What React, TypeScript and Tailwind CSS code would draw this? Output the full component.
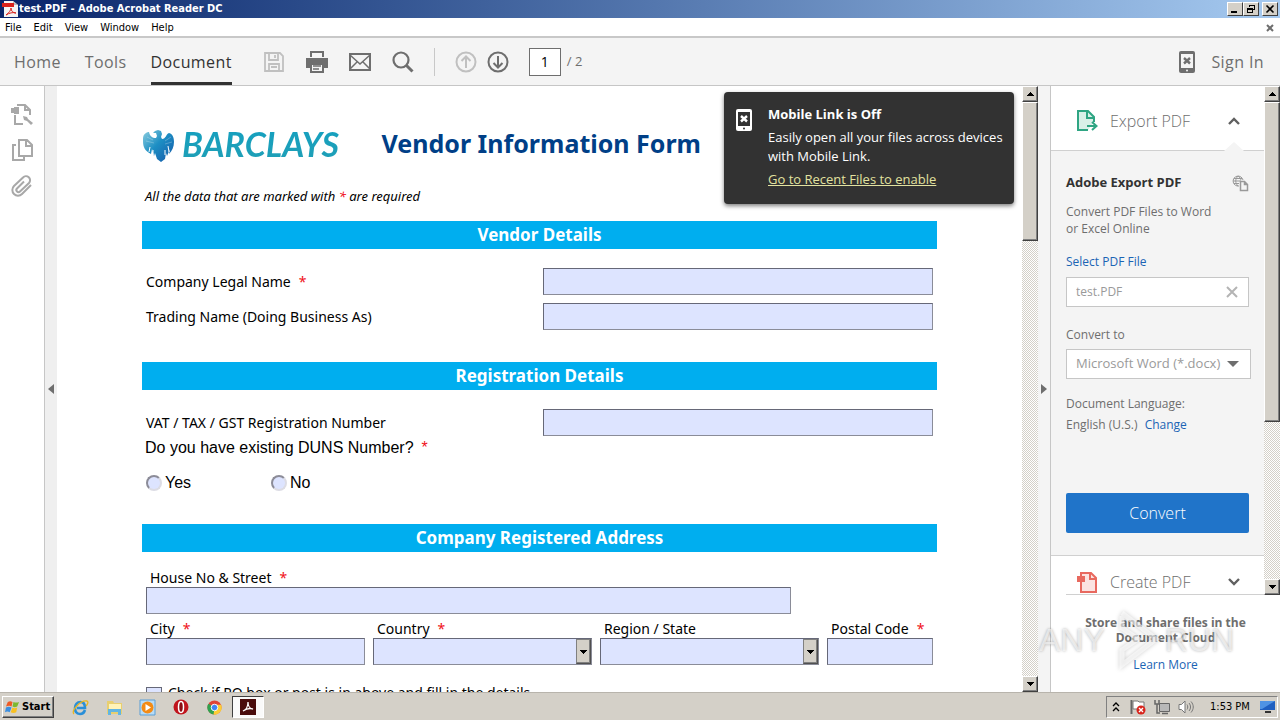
import { useState } from "react";
import type { ReactNode } from "react";

const menus = ["File", "Edit", "View", "Window", "Help"];

const ui = "font-['Open_Sans','Noto_Sans',sans-serif]";
const win = "font-['DejaVu_Sans_Condensed','DejaVu_Sans',sans-serif]";
const field = "h-[27px] w-full rounded-none border border-[#8a8c98] border-t-[#666878] border-l-[#666878] bg-[#dde4ff] px-1 text-sm outline-none";
const raised = "border border-t-white border-l-white border-r-[#404040] border-b-[#404040] bg-[#d4d0c8]";

function Arrow({ up }: { up?: boolean }) {
  return (
    <svg width="7" height="4" viewBox="0 0 7 4" shapeRendering="crispEdges" aria-hidden="true">
      <path d={up ? "M3 0h1v1h1v1h1v1h1v1H0V3h1V2h1V1h1z" : "M0 0h7v1H6v1H5v1H4v1H3V3H2V2H1V1H0z"} />
    </svg>
  );
}

function Scrollbar({ thumb }: { thumb: string }) {
  return (
    <div className="flex w-4 shrink-0 flex-col bg-[repeating-conic-gradient(#ffffff_0_25%,#d4d0c8_0_50%)] bg-[length:2px_2px]">
      <button aria-label="Scroll up" className={`flex h-4 shrink-0 items-center justify-center shadow-[inset_-1px_-1px_0_#808080] ${raised}`}>
        <Arrow up />
      </button>
      <div className={`${thumb} shrink-0 shadow-[inset_-1px_-1px_0_#808080] ${raised}`} />
      <div className="flex-1" />
      <button aria-label="Scroll down" className={`flex h-4 shrink-0 items-center justify-center shadow-[inset_-1px_-1px_0_#808080] ${raised}`}>
        <Arrow />
      </button>
    </div>
  );
}

function Icon({ size = 24, className, children }: { size?: number; className?: string; children: ReactNode }) {
  return (
    <svg width={size} height={size} viewBox="0 0 24 24" fill="none" stroke="currentColor" strokeWidth="2" className={className} aria-hidden="true">
      {children}
    </svg>
  );
}

function PhoneIcon({ className, screen }: { className: string; screen: string }) {
  return (
    <svg width="16" height="22" viewBox="0 0 16 22" className={className} aria-hidden="true">
      <rect width="16" height="22" rx="2" fill="currentColor" />
      <rect x="2" y="3" width="12" height="14" fill={screen} />
      <path d="M5 7l6 5.500M11 7l-6 5.500" stroke="currentColor" strokeWidth="2.400" />
      <circle cx="8" cy="19.500" r="1" fill={screen} />
    </svg>
  );
}

function Star() {
  return <span className="ml-2 text-[#f01020]">*</span>;
}

function Band({ children }: { children: ReactNode }) {
  return (
    <h2 className="flex h-7 items-center justify-center bg-[#00aeef] text-[17px] font-bold text-white">{children}</h2>
  );
}

function FieldRow({ id, label, required }: { id: string; label: string; required?: boolean }) {
  return (
    <div className="flex items-center justify-between px-1">
      <label htmlFor={id}>
        {label}
        {required && <Star />}
      </label>
      <div className="w-[390px]">
        <input id={id} className={field} />
      </div>
    </div>
  );
}

function Labeled({ id, label, required, select }: { id: string; label: string; required?: boolean; select?: boolean }) {
  return (
    <div className="min-w-0">
      <label htmlFor={id} className="flex h-[19px] items-center pl-1 whitespace-nowrap">
        {label}
        {required && <Star />}
      </label>
      {select ? (
        <div className="relative">
          <select id={id} className={`appearance-none ${field}`}>
            <option></option>
          </select>
          <span className="pointer-events-none absolute top-px right-px bottom-px flex w-[15px] items-center justify-center border border-t-[#808080] border-l-[#808080] border-r-[#505050] border-b-[#505050] bg-[#d4d0c8] shadow-[inset_-1px_-1px_0_#808080]">
            <Arrow />
          </span>
        </div>
      ) : (
        <input id={id} className={field} />
      )}
    </div>
  );
}

function TitleBar() {
  const box = `flex h-[14px] w-4 items-center justify-center ${raised}`;
  return (
    <header className={`flex h-[18px] shrink-0 items-center bg-linear-to-r from-[#0a246a] to-[#a6caf0] pr-[2px] pl-[2px] ${win}`}>
      <svg width="16" height="16" viewBox="0 0 16 16" aria-hidden="true">
        <path d="M2 0h9l5 4v12H2z" fill="#f4f4f4" />
        <path d="M11 0v4h5z" fill="#bbb" />
        <path d="M0 2h12v4H0z" fill="#d8221c" />
        <path d="M4 14c3-2 5-5 5-7 0 3 2 5 5 5-3-1-7 0-10 2z" fill="none" stroke="#d8221c" />
      </svg>
      <h1 className="ml-px flex-1 text-[11px] font-bold text-white">test.PDF - Adobe Acrobat Reader DC</h1>
      <button aria-label="Minimize" className={box}>
        <svg width="10" height="10" viewBox="0 0 10 10"><path d="M1 7h6v2H1z" /></svg>
      </button>
      <button aria-label="Restore" className={box}>
        <svg width="10" height="10" viewBox="0 0 10 10" fill="none" stroke="#000" shapeRendering="crispEdges">
          <path d="M3.500 3V1.500h5v4H7M3 1h6M1.500 4.500h5v4h-5zM1 5h6" />
        </svg>
      </button>
      <button aria-label="Close" className={`ml-[3px] ${box}`}>
        <svg width="10" height="10" viewBox="0 0 10 10"><path d="M1.500 1.500l7 7M8.500 1.500l-7 7" stroke="#000" strokeWidth="1.600" /></svg>
      </button>
    </header>
  );
}

function Toolbar() {
  return (
    <div className={`flex h-12 shrink-0 items-center border-b border-[#c6c6c6] bg-[#f4f4f4] pr-4 pl-[14px] text-[#6e6e6e] ${ui}`}>
      <nav className="flex h-full items-center gap-6 text-base tracking-wide">
        <a href="#home">Home</a>
        <a href="#tools">Tools</a>
        <a href="#document" className="flex h-full items-center border-b-[3px] border-[#323232] pt-[3px] text-[#323232]">Document</a>
      </nav>
      <div className="ml-[30px] flex items-center gap-[19px]">
        <button aria-label="Save" className="text-[#c0c0c0]">
          <Icon>
            <path d="M3 3h15l3 3v15H3zM7 3v7h9V3M7 21v-7h10v7M13 5v3M9 17h6" strokeWidth="1.800" />
          </Icon>
        </button>
        <button aria-label="Print">
          <Icon>
            <path d="M6 7V2h12v5M6 14v8h12v-8z" />
            <path d="M1 8h22v10h-4v-5H5v5H1z" fill="currentColor" stroke="none" />
            <path d="M8 16h8M8 19h6" strokeWidth="1.300" />
          </Icon>
        </button>
        <button aria-label="Email">
          <Icon>
            <path d="M2 4h20v16H2z" />
            <path d="M2 5l10 9L22 5M2 19l7-7M22 19l-7-7" strokeWidth="1.500" />
          </Icon>
        </button>
        <button aria-label="Search">
          <Icon>
            <circle cx="10" cy="10" r="7.500" strokeWidth="2.200" />
            <path d="M15.500 15.500l6 6" strokeWidth="3" />
          </Icon>
        </button>
      </div>
      <div className="ml-[19px] h-7 w-px bg-[#c8c8c8]" />
      <div className="ml-[19px] flex items-center gap-2">
        <button aria-label="Previous page" className="text-[#c0c0c0]">
          <Icon>
            <circle cx="12" cy="12" r="9.500" />
            <path d="M12 18V7M7.500 11L12 6.500l4.500 4.500" />
          </Icon>
        </button>
        <button aria-label="Next page">
          <Icon>
            <circle cx="12" cy="12" r="9.500" />
            <path d="M12 6v11M7.500 13l4.500 4.500 4.500-4.500" />
          </Icon>
        </button>
      </div>
      <input aria-label="Page number" defaultValue="1" className="ml-[19px] h-7 w-8 border border-[#6e6e6e] bg-white text-center text-sm text-black" />
      <span className="ml-[6px] text-[13px]">/ 2</span>
      <div className="ml-auto flex items-center gap-4">
        <PhoneIcon className="text-[#6e6e6e]" screen="#f4f4f4" />
        <button className="text-base tracking-wide">Sign In</button>
      </div>
    </div>
  );
}

function LeftRail() {
  return (
    <aside className="flex shrink-0">
      <div className="flex w-11 flex-col items-center gap-3 bg-white pt-4 text-[#a8a8a8]">
        <button aria-label="Page tools">
          <Icon>
            <path d="M7 3h8l5 5v5M15 3v5h5M5 13v9h8" />
            <path d="M1 6h3V5h5v7H4v-1H1zM13 14l4 1 1 2 5 4-2 2-4-4-3-1z" fill="currentColor" stroke="none" />
          </Icon>
        </button>
        <button aria-label="Page thumbnails">
          <Icon>
            <path d="M9 2h8l5 5v11H9zM16 2v6h6M6 7H3v15h11v-3" />
          </Icon>
        </button>
        <button aria-label="Attachments">
          <Icon>
            <path d="M21 11l-9 9a5 5 0 0 1-8-8l9-8.500a3.800 3.800 0 0 1 6 5.500l-9 8.500a2 2 0 0 1-3-3l7-7" />
          </Icon>
        </button>
      </div>
      <div className="flex w-[13px] items-center justify-center border-l border-[#c6c6c6] bg-[#efefef]">
        <svg width="6" height="10" viewBox="0 0 6 10"><path d="M6 0v10L0 5z" fill="#6e6e6e" /></svg>
      </div>
    </aside>
  );
}

function Eagle() {
  return (
    <svg width="34" height="36" viewBox="0 0 34 36" aria-hidden="true">
      <defs>
        <linearGradient id="eagle" x1="0" y1="0" x2="1" y2="1">
          <stop offset="0" stopColor="#8fcfdf" />
          <stop offset="0.450" stopColor="#1d8fc4" />
          <stop offset="1" stopColor="#1557a8" />
        </linearGradient>
      </defs>
      <path
        d="M11 7l2-2 3-1 3 1 1 3-1 3 1 2c4 0 4-5 7-6 4 1 5 5 5 9 0 5-2 9-5 12l1-5-3 7-1-3-1 6-4 3-4-3-2-6-1 3-2-7-1 5C3 25 1 21 1 15c0-4 0-6 3-8 1-1 2-1 3-1 1 4 3 6 7 6l1-2-1-3z"
        fill="url(#eagle)"
      />
      <path d="M8 21l-1 5M26 20l1 6M11 24v5M23 24v5" stroke="#ffffff" strokeWidth="1" />
      <path d="M5 11l6 3M4 15l8 2M29 11l-6 4M30 16l-7 2" stroke="#ffffff40" strokeWidth="1" />
    </svg>
  );
}

function VendorForm() {
  return (
    <main className="min-w-0 flex-1 overflow-hidden bg-white">
      <form className="ml-[85px] w-[795px] pt-10 font-['Noto_Sans','Open_Sans',sans-serif] text-sm text-black">
        <div className="flex h-9 items-center">
          <Eagle />
          <span className="ml-[6px] bg-linear-to-b from-[#14a0c0] to-[#1f9fb6] bg-clip-text font-['Lato',sans-serif] text-[34px] leading-9 font-bold text-transparent italic">BARCLAYS</span>
          <h1 className="ml-auto mr-[236px] text-[25px] font-bold text-[#003f87]">Vendor Information Form</h1>
        </div>
        <p className="mt-6 mb-[15px] h-5 pl-[3px] text-[13px] leading-5 italic">
          All the data that are marked with <span className="text-[#f01020]">*</span> are required
        </p>

        <Band>Vendor Details</Band>
        <div className="mt-[19px] mb-8 flex flex-col gap-2">
          <FieldRow id="legal" label="Company Legal Name" required />
          <FieldRow id="trading" label="Trading Name (Doing Business As)" />
        </div>

        <Band>Registration Details</Band>
        <div className="mt-[19px]">
          <FieldRow id="vat" label="VAT / TAX / GST Registration Number" />
        </div>
        <fieldset className="mb-[30px] font-['Liberation_Sans',Arial,sans-serif] text-base">
          <legend className="flex h-6 items-center pl-[3px]">
            Do you have existing DUNS Number?
            <Star />
          </legend>
          <div className="mt-3 flex h-[22px] items-center pl-1">
            {["Yes", "No"].map((v) => (
              <label key={v} className="flex w-[125px] items-center gap-[3px]">
                <input type="radio" name="duns" className="size-4 appearance-none rounded-full border-2 border-[#dcdce4] border-t-[#8c8c98] border-l-[#8c8c98] bg-[#dde4ff]" />
                {v}
              </label>
            ))}
          </div>
        </fieldset>

        <Band>Company Registered Address</Band>
        <div className="mt-4 flex flex-col gap-[5px] px-1">
          <div className="w-[645px]">
            <Labeled id="street" label="House No & Street" required />
          </div>
          <div className="grid grid-cols-[219fr_219fr_219fr_106fr] gap-2">
            <Labeled id="city" label="City" required />
            <Labeled id="country" label="Country" required select />
            <Labeled id="region" label="Region / State" select />
            <Labeled id="postal" label="Postal Code" required />
          </div>
        </div>
        <label className="mt-[22px] flex items-start gap-[6px] pl-1 leading-3">
          <input type="checkbox" className="size-4 appearance-none border border-[#666878] bg-[#dde4ff]" />
          Check if PO box or post is in above and fill in the details
        </label>
      </form>
    </main>
  );
}

function MobileLinkNotice() {
  return (
    <div role="status" className={`absolute top-[6px] right-6 flex h-28 w-[290px] gap-4 rounded-sm bg-[#323232] px-3 pt-3 text-[13px] text-white shadow-[0_2px_4px_#00000080] ${ui}`}>
      <PhoneIcon className="mt-[5px] shrink-0 text-white" screen="#323232" />
      <div className="whitespace-nowrap">
        <p className="leading-5 font-bold">Mobile Link is Off</p>
        <p className="mt-1 leading-[19px]">
          Easily open all your files across devices
          <br />
          with Mobile Link.
        </p>
        <a href="#recent" className="mt-1 block leading-[19px] text-[#e2e2a0] underline">Go to Recent Files to enable</a>
      </div>
    </div>
  );
}

function ExportPanel() {
  const [format, setFormat] = useState("docx");

  return (
    <aside className={`flex w-[230px] shrink-0 flex-col border-l border-[#c6c6c6] bg-[#f4f4f4] text-xs text-[#6e6e6e] ${ui}`}>
      <div className="flex h-[509px] shrink-0">
        <div className="min-w-0 flex-1 overflow-hidden">
          <button className="relative flex h-[65px] w-full items-center border-b border-[#d0d0d0] bg-white pt-[6px] pr-6 pl-[25px] text-base font-light">
            <svg width="24" height="24" viewBox="0 0 24 24" fill="none" stroke="#2fa583" strokeWidth="2" aria-hidden="true">
              <path d="M12 21H2V2h10l6 6v5" fill="#d9f0e8" />
              <path d="M11 2v7h7M11 17h9M16 13l4.500 4-4.500 4" />
            </svg>
            <span className="ml-[10px] flex-1 text-left">Export PDF</span>
            <svg width="12" height="8" viewBox="0 0 12 8" fill="none" stroke="#606060" strokeWidth="2.400"><path d="M1 7l5-5 5 5" /></svg>
            <span className="absolute right-5 -bottom-px h-[9px] w-5 bg-[#f4f4f4] [clip-path:polygon(50%_0,100%_100%,0_100%)]" />
          </button>
          <div className="w-[200px] pt-[22px] pr-[2px] pb-[22px] pl-[15px]">
            <div className="flex h-5 items-center justify-between">
              <h2 className="text-[13px] font-bold text-[#323232]">Adobe Export PDF</h2>
              <svg width="17" height="17" viewBox="0 0 17 17" fill="none" stroke="#999" aria-hidden="true">
                <path d="M7 11a5 5 0 1 1 4-6M1 6h8M2 3.500h8M2 8.500h5M6 1c-3 3-3 7 0 10M6 1c2 1 2.500 3 3 4" />
                <path d="M8.500 6.500h4l3 3v6h-7zM12.500 6.500v3h3" fill="#f4f4f4" strokeWidth="1.500" />
              </svg>
            </div>
            <p className="mt-[10px] leading-[17px] whitespace-nowrap">
              Convert PDF Files to Word
              <br />
              or Excel Online
            </p>
            <label htmlFor="pdf" className="mt-4 block leading-[17px] text-[#1b64b4]">Select PDF File</label>
            <div className="mt-[7px] flex h-[30px] items-center border border-[#c6c6c6] bg-white pr-[10px] pl-[9px]">
              <input id="pdf" defaultValue="test.PDF" className="min-w-0 flex-1 text-[#9a9a9a] outline-none" />
              <button aria-label="Clear file">
                <svg width="12" height="12" viewBox="0 0 12 12" stroke="#b4b4b4" strokeWidth="2"><path d="M1 1l10 10M11 1L1 11" /></svg>
              </button>
            </div>
            <label htmlFor="format" className="mt-[19px] block leading-[17px]">Convert to</label>
            <div className="relative mt-[6px] -mr-[2px]">
              <select
                id="format"
                value={format}
                onChange={(e) => setFormat(e.target.value)}
                className="h-[30px] w-full appearance-none border border-[#c6c6c6] bg-white pl-[9px] text-[13px] text-[#9a9a9a] outline-none"
              >
                <option value="docx">Microsoft Word (*.docx)</option>
                <option value="xlsx">Microsoft Excel (*.xlsx)</option>
              </select>
              <svg width="12" height="6" viewBox="0 0 12 6" className="pointer-events-none absolute top-3 right-3"><path d="M0 0h12L6 6z" fill="#6e6e6e" /></svg>
            </div>
            <p className="mt-4 leading-[17px]">Document Language:</p>
            <p className="mt-1 leading-[17px]">
              English (U.S.) <a href="#language" className="ml-1 text-[#1b64b4]">Change</a>
            </p>
            <button className="mt-[60px] h-10 w-full rounded-xs bg-[#2074c9] text-base font-light text-white">Convert</button>
          </div>
          <button className="flex h-[52px] w-full items-center border-t border-[#d0d0d0] bg-white pr-6 pl-[25px] text-base font-light">
            <svg width="24" height="24" viewBox="0 0 24 24" fill="none" stroke="#e8695f" strokeWidth="2" aria-hidden="true">
              <path d="M5 12v10h15V8l-5-5H5v4" fill="#fbe3e1" />
              <path d="M14 3v6h6" />
              <path d="M1 6h8v6H1z" fill="#e8695f" stroke="none" />
            </svg>
            <span className="ml-[10px] flex-1 text-left">Create PDF</span>
            <svg width="12" height="8" viewBox="0 0 12 8" fill="none" stroke="#606060" strokeWidth="2.400"><path d="M1 1l5 5 5-5" /></svg>
          </button>
        </div>
        <Scrollbar thumb="h-[320px]" />
      </div>
      <div className="relative flex-1 bg-white pt-5 text-center">
        <div className="absolute top-[-1px] right-4 left-[15px] h-px bg-[#d0d0d0]" />
        <p className="font-bold leading-[15px]">
          Store and share files in the
          <br />
          Document Cloud
        </p>
        <a href="#more" className="mt-[11px] block leading-[17px] text-[#1b64b4]">Learn More</a>
        <Watermark />
      </div>
    </aside>
  );
}

function Watermark() {
  return (
    <div className="pointer-events-none absolute top-3 -left-3 flex items-center gap-1 font-['Liberation_Sans',Arial,sans-serif] text-[32px] leading-[66px] text-white/60 [text-shadow:0_0_3px_#00000050]">
      <span>ANY</span>
      <svg width="52" height="64" viewBox="0 0 52 64" fill="none" stroke="#ffffff99" strokeWidth="5" className="drop-shadow-[0_0_2px_#00000050]" aria-hidden="true">
        <path d="M13 8v14M13 5l34 26-34 26V42l16-11-16-11" />
      </svg>
      <span>RUN</span>
    </div>
  );
}

function Taskbar() {
  return (
    <footer className={`flex h-7 shrink-0 items-center border-t border-[#b8b4ac] bg-[#d4d0c8] pt-px pl-[2px] text-black ${win}`}>
      <button className={`flex h-[22px] w-[52px] items-center gap-[2px] pl-[2px] text-[11px] font-bold shadow-[inset_-1px_-1px_0_#808080] ${raised}`}>
        <svg width="15" height="15" viewBox="0 0 16 16" aria-hidden="true">
          <path d="M3 2c2-1 3-1 5 0L7 7C5 6 4 6 1 7z" fill="#ee5a24" />
          <path d="M9 2c2 1 4 1 6 0l-2 5c-2 1-3 1-5 0z" fill="#7cb82f" />
          <path d="M1 8c2-1 4-1 6 0l-2 5c-2-1-3-1-5 0z" fill="#3a8ee0" />
          <path d="M8 8c2 1 3 1 5 0l-1 5c-2 1-4 1-6 0z" fill="#f8c020" />
        </svg>
        Start
      </button>
      <div className="ml-[18px] flex h-6 items-center">
        <button aria-label="Internet Explorer" className="mr-[17px]">
          <svg width="17" height="17" viewBox="0 0 17 17" fill="none">
            <path d="M13 11c-1 3-3 4-5 4-4 0-5-3-5-6s2-6 5.500-6S13 6 13 9H5" stroke="#2a8fd8" strokeWidth="2.600" />
            <path d="M2 15C-1 12 8 1 15 2c2 1 0 4-1 5" stroke="#e8b520" strokeWidth="1.300" />
          </svg>
        </button>
        <button aria-label="Explorer" className="mr-4">
          <svg width="17" height="17" viewBox="0 0 17 17">
            <path d="M1 2h6l1 2h8v11H1z" fill="#e8cf70" />
            <path d="M3 5h12v6H3z" fill="#fff3b8" />
            <path d="M2 10h13v6h-3v-3H5v3H2z" fill="#62b5e2" />
          </svg>
        </button>
        <button aria-label="Media Player" className="mr-[17px]">
          <svg width="17" height="17" viewBox="0 0 17 17">
            <path d="M1 1h15v15H1z" fill="#b8dcf6" stroke="#5a9fd6" />
            <circle cx="8.500" cy="8.500" r="6" fill="#f38b15" />
            <path d="M6.500 5l5.500 3.500L6.500 12z" fill="#fff" />
          </svg>
        </button>
        <button aria-label="Opera" className="mr-[18px]">
          <svg width="16" height="16" viewBox="0 0 16 16">
            <circle cx="8" cy="8" r="7.500" fill="#c0141c" />
            <ellipse cx="8" cy="8" rx="2.500" ry="5.500" fill="#8a0c12" stroke="#fff" strokeWidth="1.500" />
          </svg>
        </button>
        <button aria-label="Chrome" className="mr-[10px]">
          <svg width="15" height="15" viewBox="0 0 16 16">
            <circle cx="8" cy="8" r="7.500" fill="#e04436" />
            <path d="M8 8L1.500 4A7.500 7.500 0 0 0 7 15.500l4-6z" fill="#2fa24f" />
            <path d="M8 8l-1 7.500A7.500 7.500 0 0 0 15 5H8z" fill="#fccd36" />
            <circle cx="8" cy="8" r="3.500" fill="#4285f4" stroke="#fff" />
          </svg>
        </button>
        <button aria-label="Adobe Reader" className="flex h-[22px] w-8 items-center justify-center border border-t-[#404040] border-l-[#404040] border-r-white border-b-white bg-[#fafafa]">
          <svg width="16" height="16" viewBox="0 0 16 16">
            <path d="M0 0h16v16H0z" fill="#4a0c0c" />
            <path d="M3 12c3-1 5-5 5-9 0 4 2 7 5 7-3-1-7 0-10 2z" fill="none" stroke="#fff" strokeWidth="1.300" />
          </svg>
        </button>
      </div>
      <div className="mr-[2px] ml-auto flex h-[22px] w-[172px] items-center border border-t-[#808080] border-l-[#808080] border-r-white border-b-white pl-[5px] text-[11px]">
        <svg width="8" height="10" viewBox="0 0 8 10" fill="none" stroke="#000" strokeWidth="1.300" className="shrink-0"><path d="M1 4l3-3 3 3M1 9l3-3 3 3" /></svg>
        <svg width="16" height="16" viewBox="0 0 16 16" className="ml-[10px] shrink-0" aria-hidden="true">
          <path d="M1.500 1v14" stroke="#666" strokeWidth="2" />
          <path d="M3 2h5l1 1h5v7H3z" fill="#fff" stroke="#777" />
          <circle cx="11" cy="11" r="4.500" fill="#d8241c" />
          <path d="M9 9l4 4M13 9l-4 4" stroke="#fff" strokeWidth="1.400" />
        </svg>
        <svg width="16" height="16" viewBox="0 0 16 16" className="ml-2 shrink-0" fill="none" stroke="#666" aria-hidden="true">
          <path d="M5.500 4.500h10v8h-10z" fill="#b8b8b8" />
          <path d="M8 14.500h6M1 1v4h4V1M3 5v9h3" strokeWidth="1.500" />
        </svg>
        <svg width="16" height="16" viewBox="0 0 16 16" className="ml-2 shrink-0" fill="none" stroke="#777" aria-hidden="true">
          <path d="M1 5.500h2.500L7 2v12l-3.500-3.500H1z" fill="#fff" />
          <path d="M9 5.500c1 1.500 1 3.500 0 5M11 4c2 2.500 2 5.500 0 8M13 2.500c3 3.500 3 7.500 0 11" />
        </svg>
        <time className="ml-4 whitespace-nowrap">1:53 PM</time>
        <svg width="16" height="14" viewBox="0 0 16 14" className="mr-px ml-auto shrink-0" aria-hidden="true">
          <path d="M0 1h15v9H0z" fill="#1f5fc0" />
          <path d="M0 1h15L2 9H0z" fill="#4f93e4" />
          <path d="M5 11h6v2H5z" fill="#333" />
        </svg>
      </div>
    </footer>
  );
}

export default function App() {
  return (
    <div className="flex h-screen flex-col overflow-hidden bg-white">
      <TitleBar />
      <div className={`flex h-5 shrink-0 items-center justify-between border-b-2 border-[#c8c8c8] pt-[2px] pr-[6px] pl-[5px] text-[11px] text-black ${win}`}>
        <nav className="flex gap-3">
          {menus.map((m) => (
            <button key={m}>{m}</button>
          ))}
        </nav>
        <button aria-label="Close document">
          <svg width="8" height="8" viewBox="0 0 8 8" stroke="#6e6e6e" strokeWidth="2"><path d="M1 1l6 6M7 1L1 7" /></svg>
        </button>
      </div>
      <Toolbar />
      <div className="flex min-h-0 flex-1">
        <LeftRail />
        <div className="relative flex min-w-0 flex-1">
          <VendorForm />
          <Scrollbar thumb="h-[139px]" />
          <MobileLinkNotice />
        </div>
        <div className="flex w-3 shrink-0 items-center justify-center bg-[#f4f4f4]">
          <svg width="6" height="10" viewBox="0 0 6 10"><path d="M0 0v10l6-5z" fill="#6e6e6e" /></svg>
        </div>
        <ExportPanel />
      </div>
      <Taskbar />
    </div>
  );
}
